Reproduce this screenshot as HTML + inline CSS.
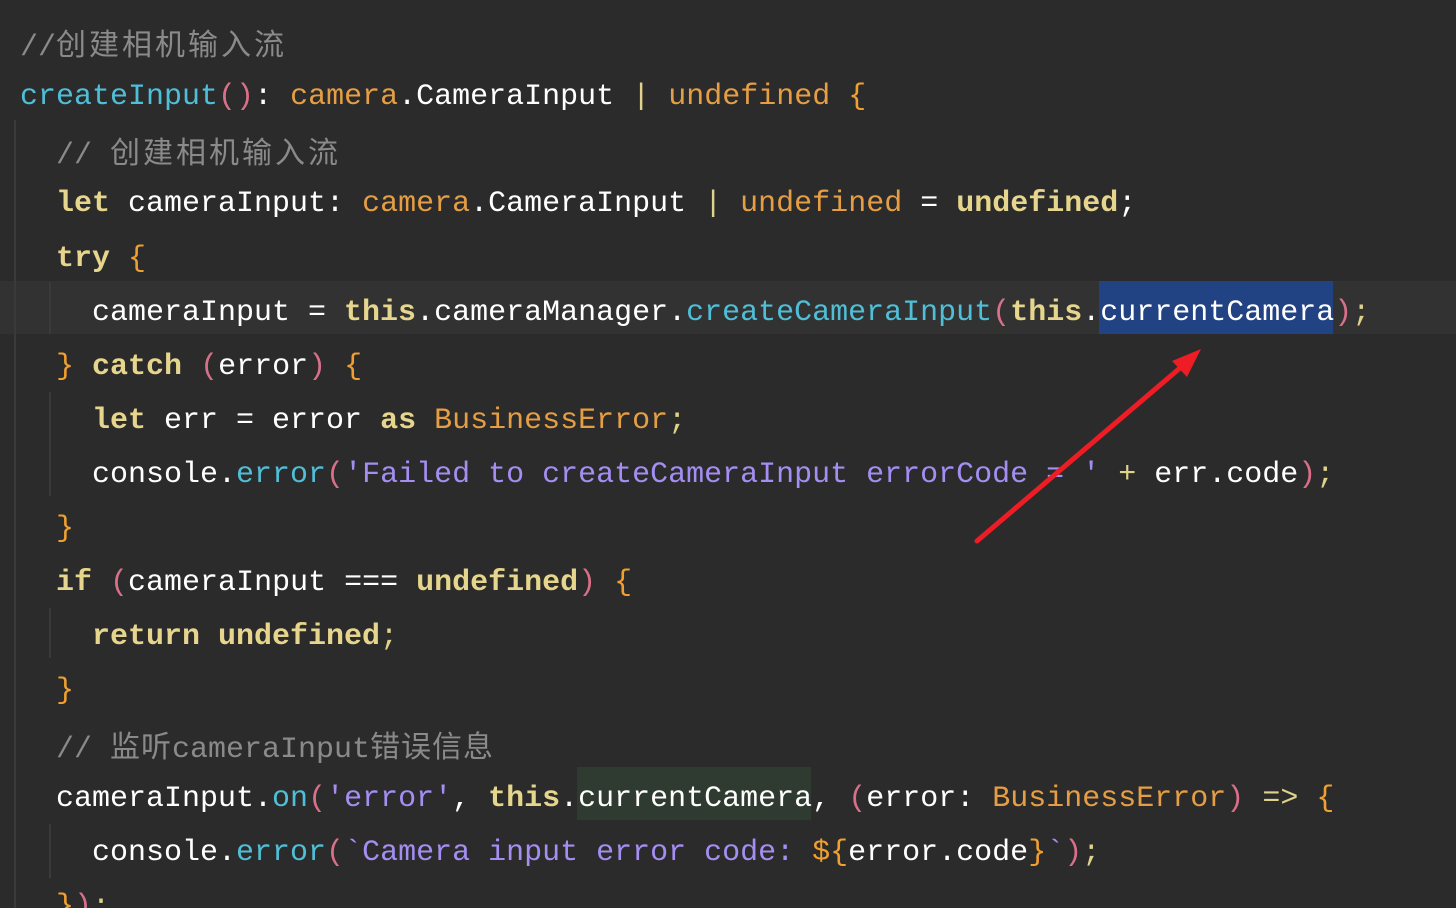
<!DOCTYPE html>
<html><head><meta charset="utf-8"><style>
html,body{margin:0;padding:0;width:1456px;height:908px;overflow:hidden;}
body{background:#2b2b2b;position:relative;font-family:"Liberation Mono","Noto Sans CJK SC",monospace;font-size:30px;}
.l{position:absolute;left:0;height:54px;line-height:54px;white-space:pre;color:#ffffff;}
.k{color:#e6d58c;font-weight:bold}
.t{color:#e59e44}
.f{color:#4fbfd8}
.s{color:#a58ef2}
.c{color:#8a8a8a}
.p{color:#d9708a}
.b{color:#f0a030}
.o{color:#dfd28a}
.cj{font-family:"Noto Sans CJK SC",sans-serif;letter-spacing:3px;font-size:30px}
.g{position:absolute;width:2px;background:#3a3a3a}
</style></head><body>
<div style="position:absolute;left:0;top:281px;width:1456px;height:53px;background:#323232"></div>
<div style="position:absolute;left:1099px;top:281px;width:234px;height:53px;background:#214283"></div>
<div style="position:absolute;left:577px;top:767px;width:234px;height:53px;background:#2f3b30"></div>
<div class="g" style="left:14px;top:120px;height:788px"></div>
<div class="g" style="left:49px;top:282px;height:52px"></div>
<div class="g" style="left:49px;top:392px;height:104px"></div>
<div class="g" style="left:49px;top:608px;height:50px"></div>
<div class="g" style="left:49px;top:824px;height:54px"></div>

<div class="l c" style="top:15px;left:20px">//<span class="cj">创建相机输入流</span></div>
<div class="l" style="top:70px;left:20px"><span class="f">createInput</span><span class="p">()</span>: <span class="t">camera</span>.CameraInput <span class="o">|</span> <span class="t">undefined</span> <span class="b">{</span></div>
<div class="l c" style="top:123px;left:56px">// <span class="cj">创建相机输入流</span></div>
<div class="l" style="top:177px;left:56px"><span class="k">let</span> cameraInput: <span class="t">camera</span>.CameraInput <span class="o">|</span> <span class="t">undefined</span> = <span class="k">undefined</span>;</div>
<div class="l" style="top:232px;left:56px"><span class="k">try</span> <span class="b">{</span></div>
<div class="l" style="top:286px;left:92px">cameraInput = <span class="k">this</span>.cameraManager.<span class="f">createCameraInput</span><span class="p">(</span><span class="k">this</span>.currentCamera<span class="p">)</span><span class="o">;</span></div>
<div class="l" style="top:340px;left:56px"><span class="b">}</span> <span class="k">catch</span> <span class="p">(</span>error<span class="p">)</span> <span class="b">{</span></div>
<div class="l" style="top:394px;left:92px"><span class="k">let</span> err = error <span class="k">as</span> <span class="t">BusinessError</span><span class="o">;</span></div>
<div class="l" style="top:448px;left:92px">console.<span class="f">error</span><span class="p">(</span><span class="s">'Failed to createCameraInput errorCode = '</span> <span class="o">+</span> err.code<span class="p">)</span><span class="o">;</span></div>
<div class="l" style="top:502px;left:56px"><span class="b">}</span></div>
<div class="l" style="top:556px;left:56px"><span class="k">if</span> <span class="p">(</span>cameraInput === <span class="k">undefined</span><span class="p">)</span> <span class="b">{</span></div>
<div class="l" style="top:610px;left:92px"><span class="k">return undefined</span><span class="o">;</span></div>
<div class="l" style="top:664px;left:56px"><span class="b">}</span></div>
<div class="l c" style="top:717px;left:56px">// <span class="cj" style="letter-spacing:1px">监听</span>cameraInput<span class="cj" style="letter-spacing:1px">错误信息</span></div>
<div class="l" style="top:772px;left:56px">cameraInput.<span class="f">on</span><span class="p">(</span><span class="s">'error'</span>, <span class="k">this</span>.currentCamera, <span class="p">(</span>error: <span class="t">BusinessError</span><span class="p">)</span> <span class="o">=&gt;</span> <span class="b">{</span></div>
<div class="l" style="top:826px;left:92px">console.<span class="f">error</span><span class="p">(</span><span class="s">`Camera input error code: </span><span class="b">${</span>error.code<span class="b">}</span><span class="s">`</span><span class="p">)</span><span class="o">;</span></div>
<div class="l" style="top:880px;left:56px"><span class="b">}</span><span class="p">)</span><span class="o">;</span></div>

<svg style="position:absolute;left:0;top:0" width="1456" height="908">
<line x1="977" y1="541" x2="1180" y2="368" stroke="#ee1c25" stroke-width="5" stroke-linecap="round"/>
<polygon points="1201,349 1172,361 1187,377" fill="#ee1c25"/>
</svg>
</body></html>
